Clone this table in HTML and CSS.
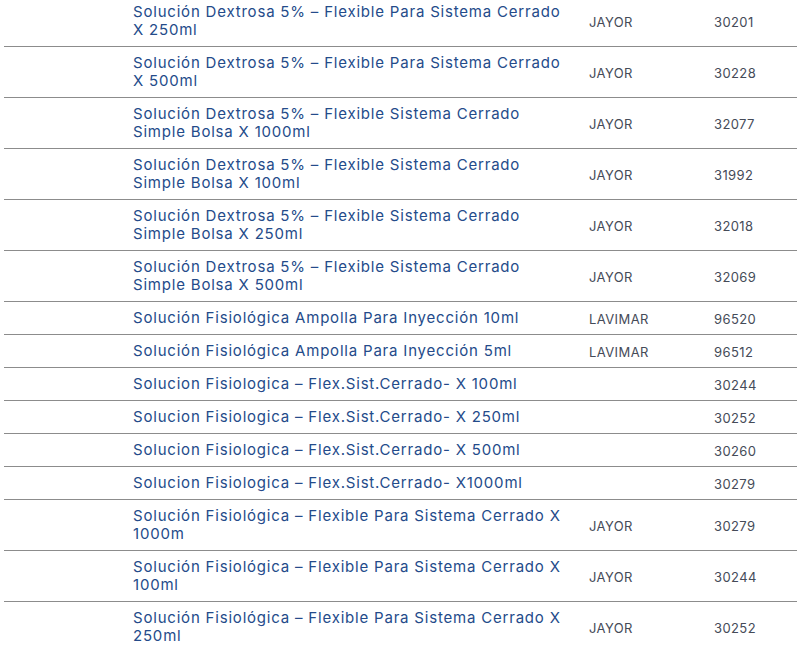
FILE: index.html
```html
<!DOCTYPE html>
<html lang="es">
<head>
<meta charset="utf-8">
<title>Productos</title>
<link rel="stylesheet" href="styles.css">
</head>
<body>
<div class="wrap">
<table class="products">
<colgroup>
<col class="c-img"><col class="c-desc"><col class="c-brand"><col class="c-code">
</colgroup>
<tbody>
<tr class="first"><td></td><td class="desc">Solución Dextrosa 5% – Flexible Para Sistema Cerrado X 250ml</td><td class="brand">JAYOR</td><td class="code">30201</td></tr>
<tr><td></td><td class="desc">Solución Dextrosa 5% – Flexible Para Sistema Cerrado X 500ml</td><td class="brand">JAYOR</td><td class="code">30228</td></tr>
<tr><td></td><td class="desc">Solución Dextrosa 5% – Flexible Sistema Cerrado Simple Bolsa X 1000ml</td><td class="brand">JAYOR</td><td class="code">32077</td></tr>
<tr><td></td><td class="desc">Solución Dextrosa 5% – Flexible Sistema Cerrado Simple Bolsa X 100ml</td><td class="brand">JAYOR</td><td class="code">31992</td></tr>
<tr><td></td><td class="desc">Solución Dextrosa 5% – Flexible Sistema Cerrado Simple Bolsa X 250ml</td><td class="brand">JAYOR</td><td class="code">32018</td></tr>
<tr><td></td><td class="desc">Solución Dextrosa 5% – Flexible Sistema Cerrado Simple Bolsa X 500ml</td><td class="brand">JAYOR</td><td class="code">32069</td></tr>
<tr><td></td><td class="desc">Solución Fisiológica Ampolla Para Inyección 10ml</td><td class="brand">LAVIMAR</td><td class="code">96520</td></tr>
<tr><td></td><td class="desc">Solución Fisiológica Ampolla Para Inyección 5ml</td><td class="brand">LAVIMAR</td><td class="code">96512</td></tr>
<tr><td></td><td class="desc">Solucion Fisiologica – Flex.Sist.Cerrado- X 100ml</td><td class="brand"></td><td class="code">30244</td></tr>
<tr><td></td><td class="desc">Solucion Fisiologica – Flex.Sist.Cerrado- X 250ml</td><td class="brand"></td><td class="code">30252</td></tr>
<tr><td></td><td class="desc">Solucion Fisiologica – Flex.Sist.Cerrado- X 500ml</td><td class="brand"></td><td class="code">30260</td></tr>
<tr><td></td><td class="desc">Solucion Fisiologica – Flex.Sist.Cerrado- X1000ml</td><td class="brand"></td><td class="code">30279</td></tr>
<tr><td></td><td class="desc">Solución Fisiológica – Flexible Para Sistema Cerrado X 1000m</td><td class="brand">JAYOR</td><td class="code">30279</td></tr>
<tr><td></td><td class="desc">Solución Fisiológica – Flexible Para Sistema Cerrado X 100ml</td><td class="brand">JAYOR</td><td class="code">30244</td></tr>
<tr><td></td><td class="desc">Solución Fisiológica – Flexible Para Sistema Cerrado X 250ml</td><td class="brand">JAYOR</td><td class="code">30252</td></tr>
</tbody>
</table>
</div>
</body>
</html>
```
FILE: styles.css
```css
html, body {
  margin: 0;
  padding: 0;
  background: #ffffff;
}
body {
  overflow: hidden;
}
.wrap {
  padding-left: 4px;
  margin-top: -4px;
}
.products {
  width: 793px;
  border-collapse: collapse;
  table-layout: fixed;
  font-family: "Inter", "Noto Sans", sans-serif;
}
.c-img { width: 129px; }
.c-desc { width: 456px; }
.c-brand { width: 125px; }
.c-code { width: 83px; }
.products td {
  border-top: 1px solid #8c8c8c;
  padding: 7px 0;
  vertical-align: middle;
}
.products tr.first td {
  border-top: none;
}
.desc {
  color: #244b8a;
  font-size: 15px;
  line-height: 18px;
  letter-spacing: 0.8px;
  padding-right: 18px !important;
}
.brand, .code {
  color: #454b58;
  font-size: 13px;
  line-height: 18px;
  letter-spacing: 0.4px;
  padding-top: 8px !important;
  padding-bottom: 6px !important;
}
```
